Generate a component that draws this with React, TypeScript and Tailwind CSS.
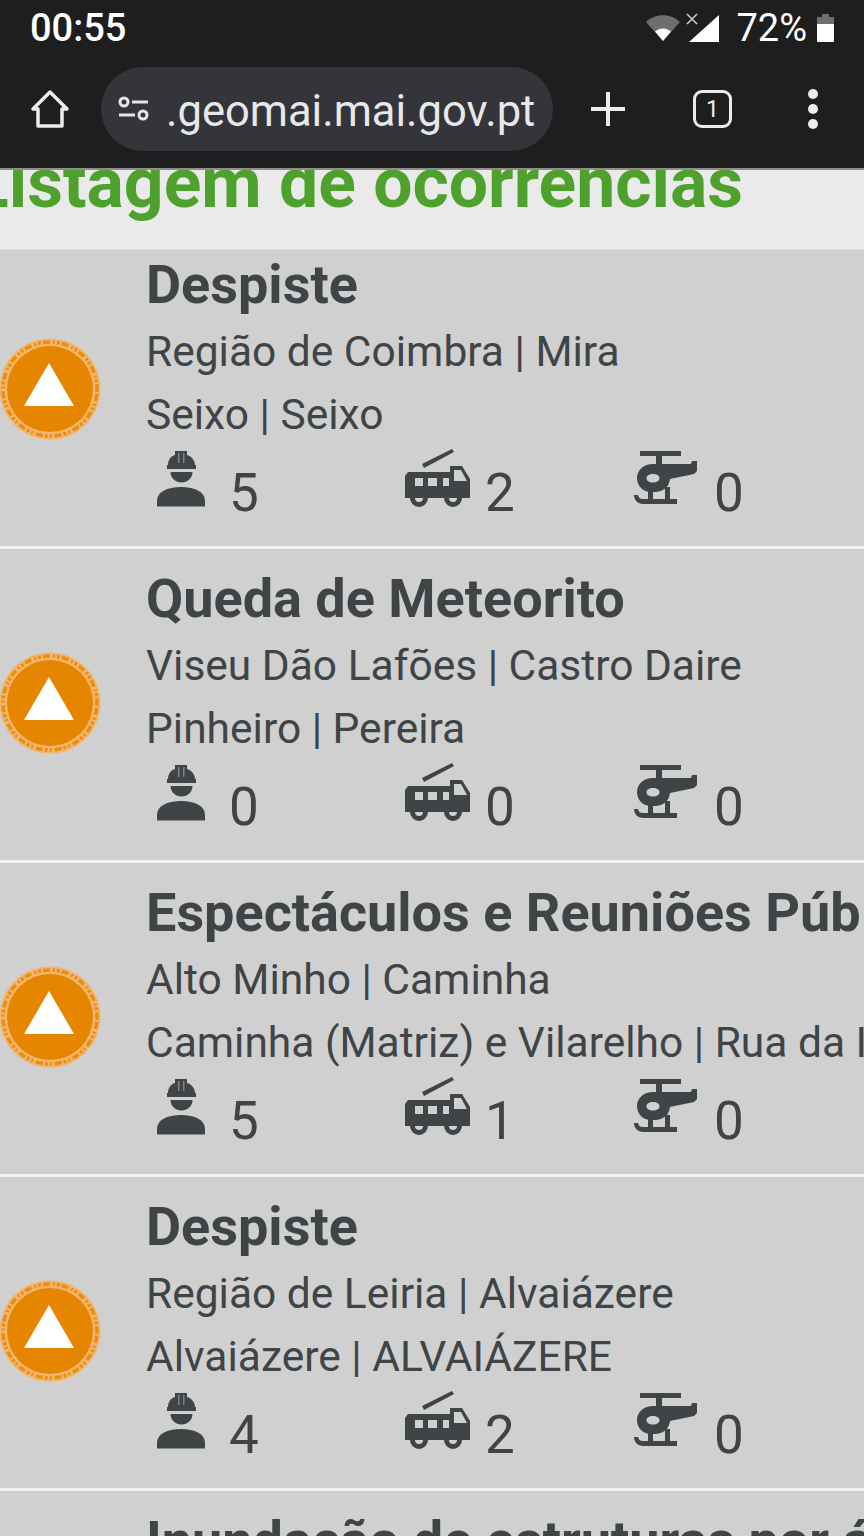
import type { FC, ReactNode } from 'react';

type Occurrence = { title: string; line1: string; line2: string; people: number; trucks: number; air: number };

const occurrences: Occurrence[] = [
  { title: 'Despiste', line1: 'Região de Coimbra | Mira', line2: 'Seixo | Seixo', people: 5, trucks: 2, air: 0 },
  { title: 'Queda de Meteorito', line1: 'Viseu Dão Lafões | Castro Daire', line2: 'Pinheiro | Pereira', people: 0, trucks: 0, air: 0 },
  { title: 'Espectáculos e Reuniões Públicas', line1: 'Alto Minho | Caminha', line2: 'Caminha (Matriz) e Vilarelho | Rua da Igreja', people: 5, trucks: 1, air: 0 },
  { title: 'Despiste', line1: 'Região de Leiria | Alvaiázere', line2: 'Alvaiázere | ALVAIÁZERE', people: 4, trucks: 2, air: 0 },
];

const WorkerIcon: FC = () => (
  <svg width="48" height="56" viewBox="0 0 48 56" className="block" fill="#3f4447">
    <path d="M11 14c0-5 3-9 7-10V0h12v4c4 1 8 5 8 10h1v4H10v-4z" />
    <path d="M21 2h1.500v10H21zM26 2h1.500v10H26z" fill="#d0d0d0" opacity="0.45" />
    <path d="M13.500 21h22c0 6-5 10.500-11 10.500S13.500 27 13.500 21z" />
    <path d="M0 55.500V50c0-9 10-14 24-14s24 5 24 14v5.500z" />
  </svg>
);

const TruckIcon: FC = () => (
  <svg width="65" height="58" viewBox="0 0 65 58" className="block" fill="#3f4447">
    <path d="M17 15 47 0l2 3-30 16z" />
    <path fillRule="evenodd" d="M3 23h42v-6h12l8 13v19H0V27zM10 29v8h8v-8zM23 29v8h9v-8zM38 29v8h6v-8zM49 21v11h13l-6-11z" />
    <path fillRule="evenodd" d="M14 40a9 9 0 1 0 0 18 9 9 0 0 0 0-18zm0 5a4 4 0 1 1 0 8 4 4 0 0 1 0-8zM48 40a9 9 0 1 0 0 18 9 9 0 0 0 0-18zm0 5a4 4 0 1 1 0 8 4 4 0 0 1 0-8z" />
  </svg>
);

const HelicopterIcon: FC = () => (
  <svg width="65" height="54" viewBox="0 0 65 54" className="block -translate-y-[2px]" fill="#3f4447">
    <path d="M6 0h41v5H6z" />
    <path d="M22 5h6v9h-6z" />
    <path fillRule="evenodd" d="M19 13h38l1-3h5v10l-3 3-24 5c-1 8-7 13-15 13h-4C9 41 3 35 3 27s7-14 16-14zM19 23c-4 0-6.500 1.800-6.500 4.200s2.500 4.300 6.500 4.300 6.500-1.900 6.500-4.300S23 23 19 23z" />
    <path d="M14 38h5v11h-5zM31 36h5v13h-5z" />
    <path d="M0 44h4c1 3 2 4 5 4h34v5H9c-5 0-9-4-9-9z" />
  </svg>
);

const Badge: FC = () => (
  <svg width="102" height="102" viewBox="0 0 102 102" className="block shrink-0 -translate-x-px -translate-y-[2px]">
    <circle cx="51" cy="51" r="50.500" fill="#f3b56c" />
    <circle cx="51" cy="51" r="47" fill="none" stroke="#e98e14" strokeWidth="3.500" strokeDasharray="3 2 7 3 2 2" />
    <circle cx="51" cy="51" r="43" fill="#e68600" />
    <path d="M50 25 25 68h50z" fill="#ffffff" />
  </svg>
);

const Stat: FC<{ value: number; className: string; children: ReactNode }> = ({ value, className, children }) => (
  <div className={`flex items-end ${className}`}>
    {children}
    <span className="-mb-[11px] text-[53px] leading-[50px] text-[#3f4447]">{value}</span>
  </div>
);

const Row: FC<{ item: Occurrence; first: boolean }> = ({ item, first }) => (
  <div className={`shrink-0 overflow-hidden border-b-[3px] border-[#f1f1f1] bg-[#d0d0d0] ${first ? 'h-[299px]' : 'h-[314px]'}`}>
    <div className={`flex h-[311px] items-center ${first ? '-mt-[15px]' : ''}`}>
      <div className="w-[146px] shrink-0">
        <Badge />
      </div>
      <div className="min-w-0 flex-1 self-start">
        <h2 className="mt-[20px] h-[60px] whitespace-nowrap text-[54px] font-bold leading-[60px] text-[#3f4447]">{item.title}</h2>
        <p className="mt-[7px] h-[63px] whitespace-nowrap text-[42.500px] leading-[60px] text-[#3f4447]">{item.line1}</p>
        <p className="h-[40px] whitespace-nowrap text-[42.500px] leading-[60px] text-[#3f4447]">{item.line2}</p>
        <div className="mt-[24px] flex items-end">
          <Stat value={item.people} className="w-[259px] gap-[24px] pl-[11px]"><WorkerIcon /></Stat>
          <Stat value={item.trucks} className="w-[229px] gap-[15px]"><TruckIcon /></Stat>
          <Stat value={item.air} className="w-[200px] gap-[15px]"><HelicopterIcon /></Stat>
        </div>
      </div>
    </div>
  </div>
);

const BrowserBar: FC = () => (
  <div className="relative z-10 h-[170px] shrink-0 border-b-2 border-[#8e8e8e] bg-[#1e1e1e] text-white">
    <div className="flex h-[56px] items-center justify-between pl-[30px] pr-[30px]">
      <span className="text-[38px] font-medium leading-none">00:55</span>
      <div className="flex items-center">
        <svg width="34" height="26" viewBox="0 0 34 26" className="mr-[6px]">
          <path d="M0 7C9-2 25-2 34 7L17 26z" fill="#6e6e6e" />
          <path d="M9 16.500c5-4 11-4 16 0L17 26z" fill="#ffffff" />
        </svg>
        <svg width="34" height="30" viewBox="0 0 34 30" className="mr-[16px]">
          <path d="M33 2v27H3z" fill="#ffffff" />
          <path d="m1 1 10 10M11 1 1 11" stroke="#1e1e1e" strokeWidth="4" />
          <path d="m1 1 10 10M11 1 1 11" stroke="#cfcfcf" strokeWidth="1.500" />
        </svg>
        <span className="mr-[10px] text-[38px] leading-none">72%</span>
        <svg width="17" height="28" viewBox="0 0 17 28">
          <path d="M5 0h7v3h5v7H0V3h5z" fill="#6e6e6e" />
          <path d="M0 10h17v17a1 1 0 0 1-1 1H1a1 1 0 0 1-1-1z" fill="#ffffff" />
        </svg>
      </div>
    </div>
    <div className="mt-[11px] flex h-[84px] items-center">
      <svg width="40" height="40" viewBox="0 0 40 40" className="ml-[30px] mr-[31px] shrink-0" fill="none" stroke="#ececec" strokeWidth="3.500" strokeLinejoin="round">
        <path d="M20 3 3 20h5v17h24V20h5z" />
      </svg>
      <div className="flex h-[84px] w-[452px] shrink-0 items-center rounded-[42px] bg-[#33353a] pl-[17px]">
        <svg width="32" height="26" viewBox="0 0 32 26" className="shrink-0" fill="none" stroke="#e6e6e6" strokeWidth="3">
          <circle cx="6" cy="6" r="4" />
          <path d="M14 6h16M1 19h16" />
          <circle cx="25" cy="19" r="4" />
        </svg>
        <span className="ml-[16px] mt-[6px] whitespace-nowrap text-[43.500px] leading-none text-[#e8e8e8]">.geomai.mai.gov.pt</span>
      </div>
      <svg width="34" height="34" viewBox="0 0 34 34" className="ml-[38px] shrink-0" stroke="#ececec" strokeWidth="4">
        <path d="M17 0v34M0 17h34" />
      </svg>
      <div className="ml-[68px] flex h-[38px] w-[39px] shrink-0 items-center justify-center rounded-[9px] border-[3.500px] border-[#ececec] text-[23px] leading-none text-[#ececec]">1</div>
      <div className="ml-[76px] flex shrink-0 flex-col gap-[5px]">
        <span className="h-[10px] w-[10px] rounded-full bg-[#ececec]" />
        <span className="h-[10px] w-[10px] rounded-full bg-[#ececec]" />
        <span className="h-[10px] w-[10px] rounded-full bg-[#ececec]" />
      </div>
    </div>
  </div>
);

export default function App() {
  return (
    <div className="flex h-[1536px] w-[864px] flex-col overflow-hidden bg-[#eaeaea]" style={{ fontFamily: 'Roboto, sans-serif' }}>
      <BrowserBar />
      <div className="h-[80px] shrink-0 border-b border-[#dedede] bg-[#eaeaea]">
        <h1 className="-ml-[29px] -mt-[24px] whitespace-nowrap text-[69.700px] font-bold leading-[74px] text-[#4fa12e]">Listagem de ocorrencias</h1>
      </div>
      {occurrences.map((item, i) => (
        <Row key={i} item={item} first={i === 0} />
      ))}
      <div className="h-[100px] shrink-0 bg-[#d0d0d0] pl-[146px]">
        <h2 className="whitespace-nowrap pt-[20px] text-[54px] font-bold leading-[60px] text-[#3f4447]">Inundação de estruturas por água</h2>
      </div>
    </div>
  );
}
